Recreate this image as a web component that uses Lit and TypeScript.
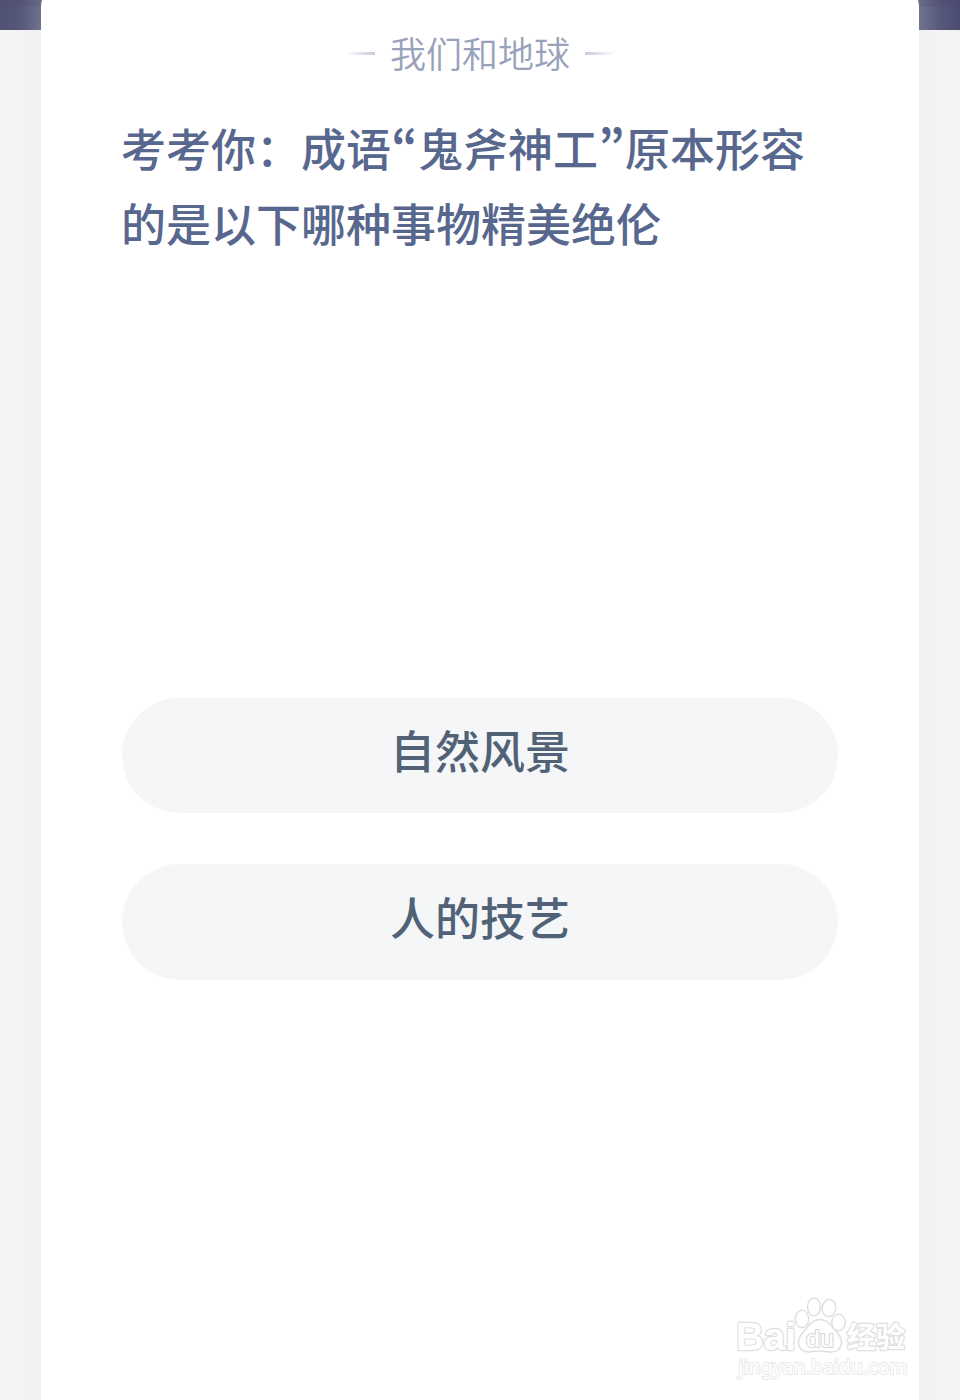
import { LitElement, html, css } from "lit";
import { customElement, property } from "lit/decorators.js";

@customElement("jingyan-mark")
class JingyanMark extends LitElement {
  static styles = css`
    :host { display: block; width: 180px; height: 92px; }
    svg { display: block; }
    .brand, .cjk, .url { fill: #fff; stroke: #e0e0e0; stroke-width: 2.4px; paint-order: stroke; stroke-linejoin: round; }
    .brand { font: 700 39px "Liberation Sans", sans-serif; }
    .du { font: 400 24px "Liberation Sans", sans-serif; fill: #fff; stroke: #dadada; stroke-width: 2.2px; paint-order: stroke; }
    .cjk { font: 700 29px "Noto Sans CJK SC", sans-serif; }
    .url { font: 400 19px "Noto Sans", sans-serif; stroke: #e8e8e8; stroke-width: 1.8px; }
    .paw { fill: #fff; stroke: #e0e0e0; stroke-width: 1.5px; }
  `;
  render() {
    return html`<svg width="180" height="92" viewBox="732 1292 180 92">
      <text class="brand" x="736" y="1350" textLength="60" lengthAdjust="spacingAndGlyphs">Bai</text>
      <g class="paw">
        <ellipse cx="802" cy="1319" rx="6.7" ry="8.7" />
        <ellipse cx="814" cy="1307" rx="6.5" ry="8.9" />
        <ellipse cx="829" cy="1308" rx="6.8" ry="8.7" transform="rotate(8 829 1308)" />
        <ellipse cx="838.5" cy="1322.5" rx="6.8" ry="8.3" />
        <path d="M820 1319.5C815 1319.5 811.5 1322 808.5 1326C804.5 1331 798.5 1335.5 798.5 1342C798.5 1349 804 1352.5 810 1352C814 1351.5 816 1351 820 1351C824 1351 827 1352 831 1352C837 1352.3 841.5 1348.5 841.5 1342C841.5 1335 835.5 1331 831.5 1326C828.5 1322 825 1319.5 820 1319.5Z" />
      </g>
      <text class="du" x="806" y="1346.5" textLength="28" lengthAdjust="spacingAndGlyphs">du</text>
      <text class="cjk" x="847" y="1348">经验</text>
      <text class="url" x="738.5" y="1373.5" textLength="169" lengthAdjust="spacingAndGlyphs">jingyan.baidu.com</text>
    </svg>`;
  }
}

@customElement("quiz-option")
class QuizOption extends LitElement {
  @property() label = "";
  static styles = css`
    :host { display: block; }
    .option {
      display: block; width: 100%; height: 115.4px; padding: 0 0 10.5px; border: 0; border-radius: 58px;
      background: #f4f6f8; color: #526276;
      font: 500 45px/66px "Noto Sans CJK SC", sans-serif;
    }
  `;
  render() {
    return html`<button class="option">${this.label}</button>`;
  }
}

@customElement("app-root")
class AppRoot extends LitElement {
  static styles = css`
    :host {
      display: block; height: 1400px; overflow: hidden; position: relative; box-sizing: border-box; padding: 0 41px;
      font-family: "Noto Sans CJK SC", sans-serif;
      background:
        linear-gradient(rgba(60, 50, 90, .13), rgba(60, 50, 90, .13)) 0 0 / 100% 7px no-repeat,
        linear-gradient(90deg, #515276 0, #55577b 20px, #71728f 41px, #71728f 919px, #55577b 942px, #4c4c71 960px) 0 0 / 100% 30px no-repeat,
        linear-gradient(90deg, #f5f5f5, #f2f2f2 41px, #f2f2f2 919px, #f4f4f4);
    }
    .card {
      box-sizing: border-box; height: 1412px; margin-top: -12px; padding: 38px 81px 0; border-radius: 18px 18px 0 0;
      background: #fff; display: flex; flex-direction: column;
    }
    .topic { display: flex; align-items: center; justify-content: center; gap: 15px; height: 54px; }
    .name { font-size: 36px; font-weight: 350; line-height: 54px; margin-top: -3px; color: #98a2bb; }
    .dash { width: 30px; height: 3px; background: linear-gradient(90deg, rgba(190, 197, 212, 0), #c5cbd9); }
    .dash.right { transform: scaleX(-1); }
    .question { margin: 30px -10px 0 -1px; height: 150px; font-size: 45px; font-weight: 500; line-height: 75px; color: #57678e; }
    .line { display: block; white-space: nowrap; }
    .quote { display: inline-flex; justify-content: center; width: 27px; font-weight: 700; font-feature-settings: "pwid"; }
    .options { display: flex; flex-direction: column; gap: 51px; margin-top: 438px; }
    .mark { position: absolute; left: 732px; top: 1292px; }
  `;
  render() {
    return html`<main class="card">
        <header class="topic">
          <span class="dash"></span><span class="name">我们和地球</span><span class="dash right"></span>
        </header>
        <div class="question">
          <span class="line">考考你：成语<span class="quote">“</span>鬼斧神工<span class="quote">”</span>原本形容</span>
          <span class="line">的是以下哪种事物精美绝伦</span>
        </div>
        <div class="options">
          ${["自然风景", "人的技艺"].map((o) => html`<quiz-option .label=${o}></quiz-option>`)}
        </div>
      </main>
      <jingyan-mark class="mark"></jingyan-mark>`;
  }
}
